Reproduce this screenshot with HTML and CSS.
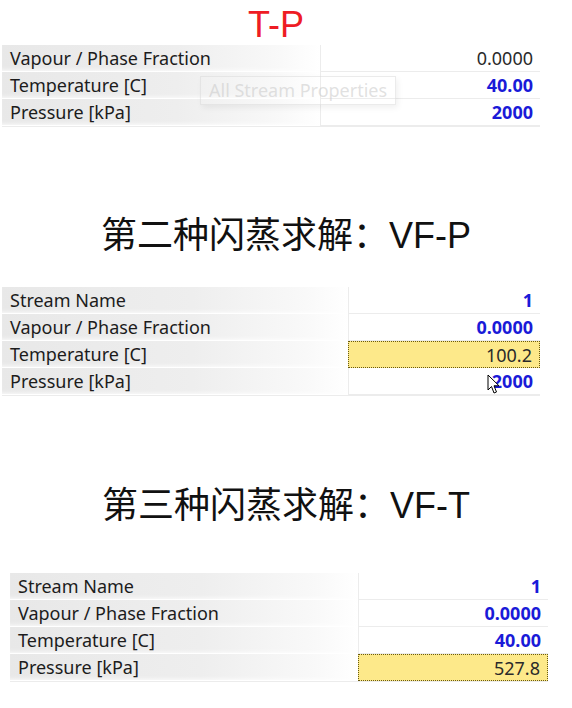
FILE: index.html
```html
<!DOCTYPE html>
<html lang="zh">
<head>
<meta charset="utf-8">
<link rel="stylesheet" href="styles.css">
</head>
<body>
<div class="page">
  <h1 class="title title-red">T-P</h1>
  <div class="grid grid-1">
    <div class="label">Vapour / Phase Fraction</div><div class="value plain">0.0000</div>
    <div class="label">Temperature [C]</div><div class="value blue">40.00</div>
    <div class="label">Pressure [kPa]</div><div class="value blue">2000</div>
    <div class="ghost">All Stream Properties</div>
  </div>

  <h2 class="title title-black sec-2">第二种闪蒸求解：VF-P</h2>
  <div class="grid grid-2">
    <div class="label">Stream Name</div><div class="value blue">1</div>
    <div class="label">Vapour / Phase Fraction</div><div class="value blue">0.0000</div>
    <div class="label">Temperature [C]</div><div class="value plain hl">100.2</div>
    <div class="label">Pressure [kPa]</div><div class="value blue cursor-cell">2000
      <svg class="cursor" width="14" height="21" viewBox="0 0 14 21"><path d="M1 1 L1 16 L4.5 12.5 L7 19 L9.5 18 L7 11.8 L12 11.8 Z" fill="#fff" stroke="#000" stroke-width="1" stroke-linejoin="round"/></svg>
    </div>
  </div>

  <h2 class="title title-black sec-3">第三种闪蒸求解：VF-T</h2>
  <div class="grid grid-3">
    <div class="label">Stream Name</div><div class="value blue">1</div>
    <div class="label">Vapour / Phase Fraction</div><div class="value blue">0.0000</div>
    <div class="label">Temperature [C]</div><div class="value blue">40.00</div>
    <div class="label">Pressure [kPa]</div><div class="value plain hl">527.8</div>
  </div>
</div>
</body>
</html>
```
FILE: styles.css
```css
html, body {
  margin: 0;
  padding: 0;
  background: #ffffff;
}
.page {
  width: 572px;
  height: 708px;
  overflow: hidden;
}
.title {
  margin: 0;
  font-weight: normal;
  text-align: center;
  font-family: "Liberation Sans", "Noto Sans CJK SC", sans-serif;
  font-size: 36px;
  line-height: 40px;
}
.title-red {
  color: #ee1c24;
  padding-top: 5px;
  padding-right: 20px;
}
.title-black {
  color: #111111;
}
.sec-2 {
  margin-top: 89px;
}
.sec-3 {
  margin-top: 90px;
}
.grid {
  position: relative;
  display: grid;
  grid-auto-rows: 27px;
  font-family: "Noto Sans", "DejaVu Sans", sans-serif;
  font-size: 18px;
  border-bottom: 1px solid #ececec;
}
.grid-1 {
  margin-left: 2px;
  width: 538px;
  grid-template-columns: 318px 220px;
}
.grid-2 {
  margin-left: 2px;
  margin-top: 31px;
  width: 538px;
  grid-template-columns: 346px 192px;
}
.grid-3 {
  margin-left: 10px;
  margin-top: 47px;
  width: 538px;
  grid-template-columns: 348px 190px;
}
.label {
  display: flex;
  align-items: center;
  padding-left: 8px;
  color: #1c1c1c;
  background: linear-gradient(to right, #e8e8e8 0%, #eeeeee 55%, #f9f9f9 88%, #ffffff 100%);
  border-bottom: 1px solid #ffffff;
  box-shadow: inset 0 -4px 4px -3px rgba(255, 255, 255, 0.8);
}
.value {
  display: flex;
  align-items: center;
  justify-content: flex-end;
  padding-right: 7px;
  border-left: 1px solid #ececec;
  border-bottom: 1px solid #ececec;
  background: #ffffff;
}
.plain {
  color: #2a2a2a;
}
.blue {
  color: #1a1ad8;
  font-weight: bold;
}
.hl {
  background: #fde98a;
  border: 1px dotted #6a5a10;
}
.cursor-cell {
  position: relative;
}
.cursor {
  position: absolute;
  left: 138px;
  top: 6px;
}
.ghost {
  position: absolute;
  left: 198px;
  top: 31px;
  padding: 1px 8px 2px;
  color: rgba(200, 200, 200, 0.55);
  font-size: 18px;
  border: 1px solid rgba(215, 215, 215, 0.5);
  box-shadow: 2px 3px 6px rgba(0, 0, 0, 0.06);
  pointer-events: none;
}
```
